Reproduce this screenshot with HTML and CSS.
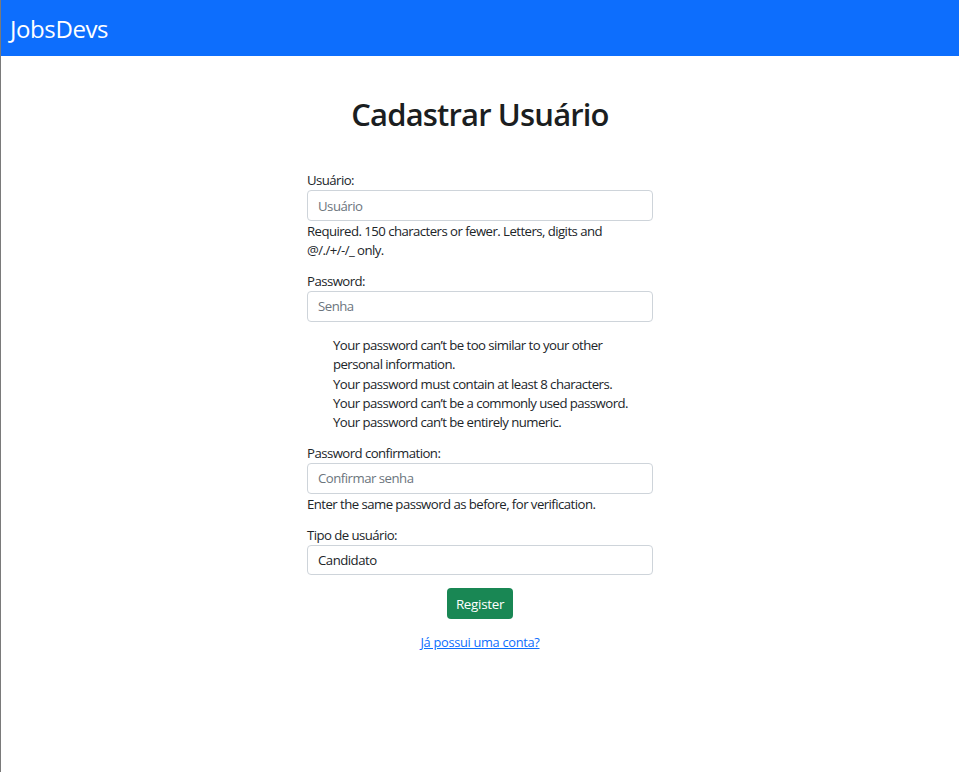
FILE: index.html
```html
<!DOCTYPE html>
<html lang="pt-BR">
<head>
<meta charset="utf-8">
<title>JobsDevs</title>
<link rel="stylesheet" href="styles.css">
</head>
<body>
<div class="page">
  <nav class="navbar">
    <a class="brand" href="#">JobsDevs</a>
  </nav>
  <main class="content">
    <h2 class="title">Cadastrar Usuário</h2>
    <form class="form">
      <div class="field">
        <label class="label">Usuário:</label>
        <input class="input" type="text" placeholder="Usuário">
        <div class="help">Required. 150 characters or fewer. Letters, digits and <span class="nowrap">@/./+/-/_ only.</span></div>
      </div>
      <div class="field">
        <label class="label">Password:</label>
        <input class="input" type="password" placeholder="Senha">
        <ul class="rules">
          <li>Your password can’t be too similar to your other personal information.</li>
          <li>Your password must contain at least 8 characters.</li>
          <li>Your password can’t be a commonly used password.</li>
          <li>Your password can’t be entirely numeric.</li>
        </ul>
      </div>
      <div class="field">
        <label class="label">Password confirmation:</label>
        <input class="input" type="password" placeholder="Confirmar senha">
        <div class="help">Enter the same password as before, for verification.</div>
      </div>
      <div class="field last">
        <label class="label">Tipo de usuário:</label>
        <div class="select">Candidato</div>
      </div>
      <div class="actions">
        <button class="btn" type="button">Register</button>
        <a class="login" href="#">Já possui uma conta?</a>
      </div>
    </form>
  </main>
</div>
</body>
</html>
```
FILE: styles.css
```css
* { box-sizing: border-box; }
html, body { margin: 0; padding: 0; }
body {
  font-family: "Open Sans", "Noto Sans", "Liberation Sans", sans-serif;
  color: #212529;
  background: #fff;
}
.page {
  min-height: 100vh;
  border-left: 1px solid #7a7a7a;
}
.navbar {
  height: 56px;
  background: #0d6efd;
  display: flex;
  align-items: center;
  padding: 0 9px;
}
.brand {
  color: #fff;
  text-decoration: none;
  font-size: 24px;
  letter-spacing: -0.4px;
  line-height: 1;
  padding-top: 1px;
}
.content {
  display: flex;
  flex-direction: column;
  align-items: center;
}
.title {
  margin: 39px 0 36px;
  font-size: 31px;
  font-weight: 600;
  letter-spacing: -0.85px;
  line-height: 38px;
  color: #1b1e21;
}
.form {
  width: 346px;
  display: flex;
  flex-direction: column;
  font-size: 13.2px;
  letter-spacing: -0.55px;
}
.nowrap { white-space: nowrap; }
.field { display: flex; flex-direction: column; margin-bottom: 10.4px; }
.field.last { margin-bottom: 13px; }
.label { line-height: 20px; padding-top: 1px; }
.input, .select {
  height: 31px;
  border: 1px solid #ced4da;
  border-radius: 4px;
  padding: 0 10px;
  font-family: inherit;
  font-size: 13.2px;
  letter-spacing: -0.5px;
  color: #212529;
  outline: none;
}
.input::placeholder { color: #6c757d; }
.select { height: 30px; display: flex; align-items: center; }
.help { line-height: 19.3px; padding-top: 1px; margin-bottom: -1px; }
.field + .field.last { margin-top: 0.6px; }
.rules {
  list-style: none;
  margin: 13px 0 0;
  padding-left: 26px;
  line-height: 19.3px;
}
.rules li { position: relative; top: 1px; }
.actions {
  display: flex;
  flex-direction: column;
  align-items: center;
}
.btn {
  height: 31px;
  padding: 0 9px;
  border: none;
  border-radius: 4px;
  background: #198754;
  color: #fff;
  font-family: inherit;
  font-size: 13.4px;
  letter-spacing: -0.3px;
}
.login {
  margin-top: 14px;
  color: #0d6efd;
  font-size: 12.8px;
  letter-spacing: -0.3px;
  line-height: 17px;
  padding-top: 1px;
}
```
